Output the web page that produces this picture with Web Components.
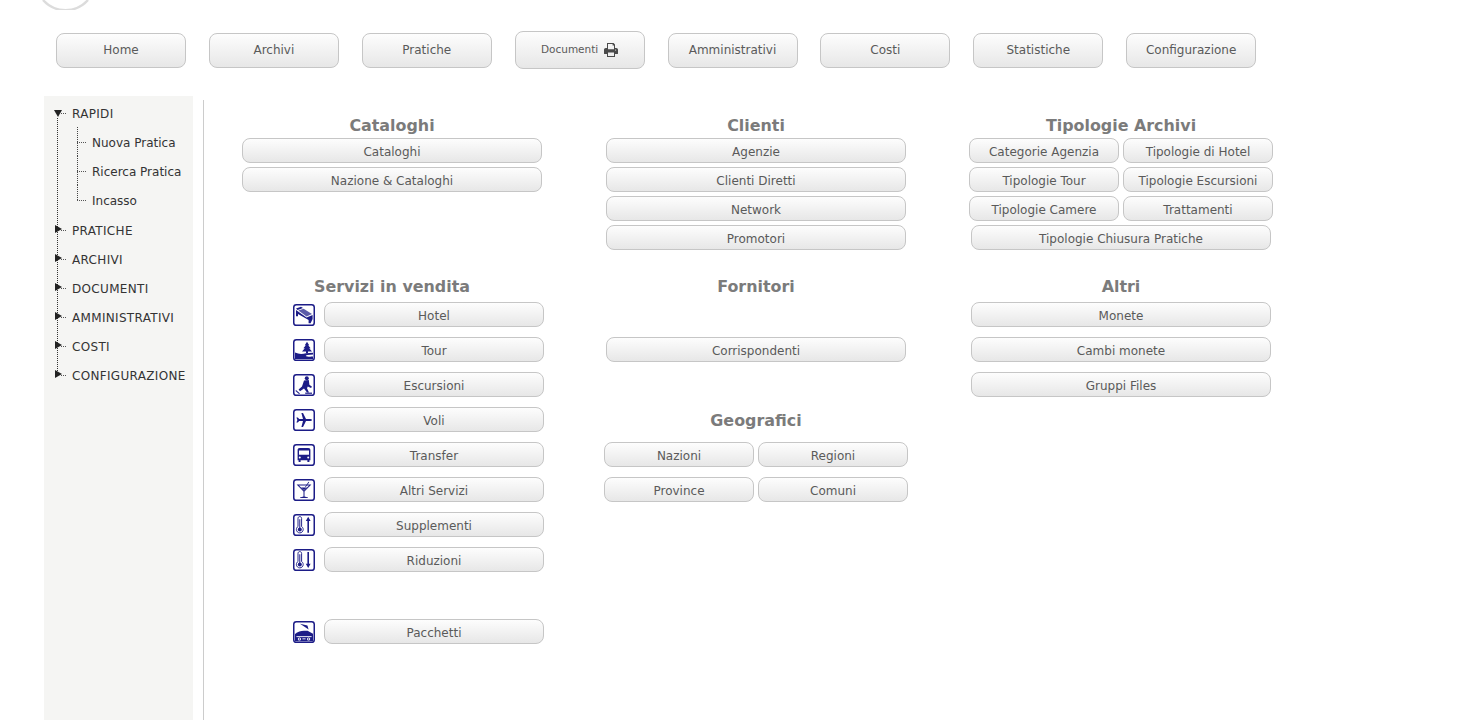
<!DOCTYPE html>
<html lang="it"><head><meta charset="utf-8"><title>Archivi</title>
<style>
html,body{margin:0;padding:0;height:720px;overflow:hidden;background:#fff;font-family:"DejaVu Sans",Verdana,sans-serif}
</style></head><body>
<x-app></x-app>
<script>
const thermo='<path d="M5 4.4C5 3.2 5.8 2.6 6.8 2.6 7.8 2.6 8.6 3.2 8.6 4.4V12.6C9.6 13.2 10.2 14.2 10.2 15.4 10.2 17.4 8.7 18.9 6.8 18.9 4.9 18.9 3.4 17.4 3.4 15.4 3.4 14.2 4 13.2 5 12.6Z" fill="none" stroke="#1c1c87" stroke-width=".95"/><circle cx="6.8" cy="15.4" r="2"/><path d="M6.3 5.2H7.3V14H6.3Z"/>';
const ICONS={
bed:'<path d="M3 4.4 8 2.8 10 4 4.6 6Z"/><path opacity=".72" d="M5.4 6.6 10.6 4.8 19 10 13.6 12.4Z"/><path d="M3 6 13.6 13.4 19.6 11V15L17.6 19.2H15.6V16L5 10V12.2H3Z"/>',
tree:'<path d="M14 2.8 16.2 6.2H15.2L17.6 9.2H16.2L19 12.4H15V14.2H13V12.4H9L11.8 9.2H10.4L12.8 6.2H11.8Z"/><path d="M2 13.6C6 15.4 10 15 13 14.2L20 13.8V15.6L14.4 16C11.4 16.9 12.6 18 20 17.6V20H2Z"/>',
skate:'<circle cx="13.8" cy="4.2" r="2"/><path d="M11 6.6 15.8 6 16.4 10.8 19 12.8 18 14 14.8 12.4 14 14.2 16 18.4H14L11 14.4 7 17.2 5.6 15.6 9 12.4Z"/><path d="M3 16 7 19.4 6 20.1 2.5 17Z"/><path d="M12.2 18.6H19V19.8H12.2Z"/>',
plane:'<path d="M19 11C19 11.8 17.8 12 16.2 12H13L10 18H8.4L10 12H6.2L4.8 13.6H3.4L4.4 11 3.4 8.4H4.8L6.2 10H10L8.4 4H10L13 10H16.2C17.8 10 19 10.2 19 11Z"/>',
bus:'<path fill-rule="evenodd" d="M6.8 4H15.2C16.8 4 17.4 4.8 17.4 6.2V16.2H16.4V18H14.4V16.2H7.6V18H5.6V16.2H4.6V6.2C4.6 4.8 5.2 4 6.8 4ZM6 6.4V10.8H16V6.4ZM6.8 12.4A1 1 0 1 0 6.8 14.4 1 1 0 1 0 6.8 12.4ZM15.2 12.4A1 1 0 1 0 15.2 14.4 1 1 0 1 0 15.2 12.4Z"/>',
glass:'<path fill-rule="evenodd" d="M3.6 5.6H18.4L11.5 12.6V17.4L15 18.4V19H7V18.4L10.5 17.4V12.6ZM6 6.6 11 11.6 16 6.6Z"/><path d="M8 8.4H14L11 11.2Z"/><path d="M12 8 15.5 2.8 16.2 3.2 12.8 8Z"/>',
up:thermo+'<path d="M15.2 2.8 17.6 7H16V18.8H14.4V7H12.8Z"/>',
down:thermo+'<path d="M15.2 19 17.6 14.8H16V3H14.4V14.8H12.8Z"/>',
pack:'<path d="M7 2.8 14.4 4.6 15.6 8.4Z"/><path d="M2 13C5 11 7.6 9.8 11 9.8H14.6L20 12.8V20.2H2Z"/><path fill="#fff" d="M3.4 15.2H18.6V16.1H3.4Z"/><circle cx="6.4" cy="18" r="1.6" fill="#fff"/><circle cx="15.6" cy="18" r="1.6" fill="#fff"/><circle cx="6.4" cy="18" r=".7"/><circle cx="15.6" cy="18" r=".7"/><path fill="#fff" d="M9.4 17.4H12.6V18.3H9.4Z"/>'
};
class XIcon extends HTMLElement{
 connectedCallback(){const n=this.getAttribute('name');
  this.attachShadow({mode:'open'}).innerHTML=`<style>:host{display:block;width:22px;height:22px;margin-top:1px}svg{display:block}</style>
  <svg width="22" height="22" viewBox="0 0 22 22"><rect x=".75" y=".75" width="20.5" height="20.5" rx="2.6" fill="#fff" stroke="#1c1c87" stroke-width="1.5"/><g fill="#1c1c87">${ICONS[n]}</g></svg>`;}
}
customElements.define('x-icon',XIcon);

class XBtn extends HTMLElement{
 connectedCallback(){this.attachShadow({mode:'open'}).innerHTML=`<style>
 :host{display:flex;align-items:center;justify-content:center;box-sizing:border-box;width:var(--w,300px);height:var(--h,25px);flex:none;
  border:1px solid #c6c6c6;border-radius:var(--r,8px);background:linear-gradient(#fdfdfd,#e7e7e7);color:#5a5a5a;
  font:12px/1 "DejaVu Sans",Verdana,sans-serif;white-space:nowrap;padding:var(--pad,3px 0 0)}
 </style><slot></slot>`;}
}
customElements.define('x-btn',XBtn);

class XTitle extends HTMLElement{
 connectedCallback(){this.attachShadow({mode:'open'}).innerHTML=`<style>
 :host{display:block;text-align:center;height:24px;font:bold 15.9px/24px "DejaVu Sans",Verdana,sans-serif;color:#7b7b7b;white-space:nowrap}
 </style><slot></slot>`;}
}
customElements.define('x-title',XTitle);

class XNav extends HTMLElement{
 connectedCallback(){this.attachShadow({mode:'open'}).innerHTML=`<style>
 :host{display:flex;align-items:center;gap:22.88px;padding-left:56px;height:38px;margin-top:21px}
 x-btn{--w:130px;--h:35px;--pad:0 0 1px}
 .doc{--h:38px;--pad:0 0 1px}
 .doc span{font-size:10.5px}
 svg{margin-left:6px;display:block}
 </style>
 <x-btn>Home</x-btn><x-btn>Archivi</x-btn><x-btn>Pratiche</x-btn>
 <x-btn class="doc"><span>Documenti</span><svg width="14" height="14" viewBox="0 0 14 14" fill="#4a4a4a"><path fill-rule="evenodd" d="M3 0H9.6L11 1.4V5H12.2C13.2 5 14 5.8 14 6.8V10.4C14 10.8 13.7 11 13.4 11H11V14H3V11H.6C.3 11 0 10.8 0 10.4V6.8C0 5.8.8 5 1.8 5H3ZM4 1V6.2H10V2.4H8.6V1ZM4 9.4V13H10V9.4ZM11.6 6.4A.6.6 0 1 0 11.6 7.6.6.6 0 1 0 11.6 6.4Z"/></svg></x-btn>
 <x-btn>Amministrativi</x-btn><x-btn>Costi</x-btn><x-btn>Statistiche</x-btn><x-btn>Configurazione</x-btn>`;}
}
customElements.define('x-nav',XNav);

class XLogo extends HTMLElement{
 connectedCallback(){this.attachShadow({mode:'open'}).innerHTML=`<style>:host{display:block;height:10px;padding-left:40px}svg{display:block}</style>
 <svg width="60" height="10" viewBox="0 0 60 10"><path d="M3 0A30 30 0 0 0 48 0" fill="none" stroke="#dcdcdc" stroke-width="2.4"/></svg>`;}
}
customElements.define('x-logo',XLogo);

class XTreeItem extends HTMLElement{
 connectedCallback(){const kind=this.getAttribute('kind');
 const tri=kind==='open'?'<path d="M0 0H8L4 7Z"/>':'<path d="M0 0 7 4 0 8Z"/>';
 this.attachShadow({mode:'open'}).innerHTML=`<style>
 :host{display:block;position:relative;height:29px;line-height:31px;font-size:12px;color:#333;white-space:nowrap}
 :host([kind]){padding-left:28px;letter-spacing:.32px}
 :host(:not([kind])){padding-left:48px}
 .h{display:block;position:absolute;top:14px;height:1px;background:repeating-linear-gradient(90deg,#555 0 1px,transparent 1px 2px)}
 :host([kind]) .h{left:17px;width:6px}
 :host(:not([kind])) .h{left:33px;width:9px}
 .v{display:block;position:absolute;width:1px;background:repeating-linear-gradient(#444 0 1px,transparent 1px 2px)}
 :host(:not([kind])) .v{left:33px;top:-1px;height:30px}
 :host([last]) .v{height:15px !important}
 svg{position:absolute;left:${kind==='open'?10:11}px;top:${kind==='open'?11:9}px}
 </style>
 ${kind?`<svg width="8" height="8" fill="#222">${tri}</svg>`:'<i class="v"></i>'}<i class="h"></i><slot></slot>`;}
}
customElements.define('x-tree-item',XTreeItem);

class XTree extends HTMLElement{
 connectedCallback(){this.attachShadow({mode:'open'}).innerHTML=`<style>
 :host{display:block;position:relative;box-sizing:border-box;width:149px;flex:none;height:624px;background:#f5f5f3;padding-top:3px}
 .line{display:block;position:absolute;left:13px;top:22px;width:1px;height:258px;background:repeating-linear-gradient(#333 0 1px,transparent 1px 2px)}
 .gap{height:1px}
 </style><i class="line"></i>
 <x-tree-item kind="open">RAPIDI</x-tree-item>
 <x-tree-item>Nuova Pratica</x-tree-item><x-tree-item>Ricerca Pratica</x-tree-item><x-tree-item last>Incasso</x-tree-item>
 <div class="gap"></div>
 <x-tree-item kind="closed">PRATICHE</x-tree-item><x-tree-item kind="closed">ARCHIVI</x-tree-item><x-tree-item kind="closed">DOCUMENTI</x-tree-item>
 <x-tree-item kind="closed">AMMINISTRATIVI</x-tree-item><x-tree-item kind="closed">COSTI</x-tree-item><x-tree-item kind="closed">CONFIGURAZIONE</x-tree-item>`;}
}
customElements.define('x-tree',XTree);

class XServ extends HTMLElement{
 connectedCallback(){this.attachShadow({mode:'open'}).innerHTML=`<style>
 :host{display:flex;align-items:center;justify-content:flex-end;gap:9px;height:25px;margin-bottom:10px}
 x-btn{--w:220px}
 </style><x-icon name="${this.getAttribute('icon')}"></x-icon><x-btn><slot></slot></x-btn>`;}
}
customElements.define('x-serv',XServ);

class XContent extends HTMLElement{
 connectedCallback(){this.attachShadow({mode:'open'}).innerHTML=`<style>
 :host{display:grid;grid-template-columns:364px 365px 304px;grid-template-rows:161px auto;align-content:start;box-sizing:border-box;
  height:620px;margin-top:4px;flex:1;border-left:1px solid #ccc;padding:14px 0 0 36px}
 .col{width:304px;display:flex;flex-direction:column;align-items:center}
 .col>x-title{align-self:stretch}
 .stack{display:flex;flex-direction:column;gap:4px;align-items:center}
 .pairs{display:grid;grid-template-columns:150px 150px;gap:4px}
 .pairs x-btn{--w:150px}
 .loose{display:grid;grid-template-columns:150px 150px;column-gap:4px;row-gap:10px}
 .loose x-btn{--w:150px}
 .t2{margin-bottom:3px}
 .list{display:flex;flex-direction:column;gap:10px;align-items:center}
 .serv{align-self:stretch}
 .pk{margin-top:47px}
 .sp{height:35px}
 .geo{align-self:stretch;margin-top:47px;margin-bottom:9px}
 </style>
 <div class="col"><x-title>Cataloghi</x-title><div class="stack"><x-btn>Cataloghi</x-btn><x-btn>Nazione &amp; Cataloghi</x-btn></div></div>
 <div class="col"><x-title>Clienti</x-title><div class="stack"><x-btn>Agenzie</x-btn><x-btn>Clienti Diretti</x-btn><x-btn>Network</x-btn><x-btn>Promotori</x-btn></div></div>
 <div class="col"><x-title>Tipologie Archivi</x-title><div class="stack"><div class="pairs">
  <x-btn>Categorie Agenzia</x-btn><x-btn>Tipologie di Hotel</x-btn><x-btn>Tipologie Tour</x-btn><x-btn>Tipologie Escursioni</x-btn><x-btn>Tipologie Camere</x-btn><x-btn>Trattamenti</x-btn></div><x-btn>Tipologie Chiusura Pratiche</x-btn></div></div>

 <div class="col"><x-title class="t2">Servizi in vendita</x-title><div class="serv">
  <x-serv icon="bed">Hotel</x-serv><x-serv icon="tree">Tour</x-serv><x-serv icon="skate">Escursioni</x-serv><x-serv icon="plane">Voli</x-serv><x-serv icon="bus">Transfer</x-serv><x-serv icon="glass">Altri Servizi</x-serv><x-serv icon="up">Supplementi</x-serv><x-serv icon="down">Riduzioni</x-serv>
  <x-serv class="pk" icon="pack">Pacchetti</x-serv></div></div>
 <div class="col"><x-title class="t2">Fornitori</x-title><div class="sp"></div><x-btn>Corrispondenti</x-btn>
  <x-title class="geo">Geografici</x-title><div class="loose"><x-btn>Nazioni</x-btn><x-btn>Regioni</x-btn><x-btn>Province</x-btn><x-btn>Comuni</x-btn></div></div>
 <div class="col"><x-title class="t2">Altri</x-title><div class="list"><x-btn>Monete</x-btn><x-btn>Cambi monete</x-btn><x-btn>Gruppi Files</x-btn></div></div>`;}
}
customElements.define('x-content',XContent);

class XApp extends HTMLElement{
 connectedCallback(){this.attachShadow({mode:'open'}).innerHTML=`<style>
 :host{display:block;height:720px;overflow:hidden}
 main{display:flex;gap:10px;padding-left:44px;margin-top:27px}
 </style><x-logo></x-logo><x-nav></x-nav><main><x-tree></x-tree><x-content></x-content></main>`;}
}
customElements.define('x-app',XApp);
</script>
</body></html>
